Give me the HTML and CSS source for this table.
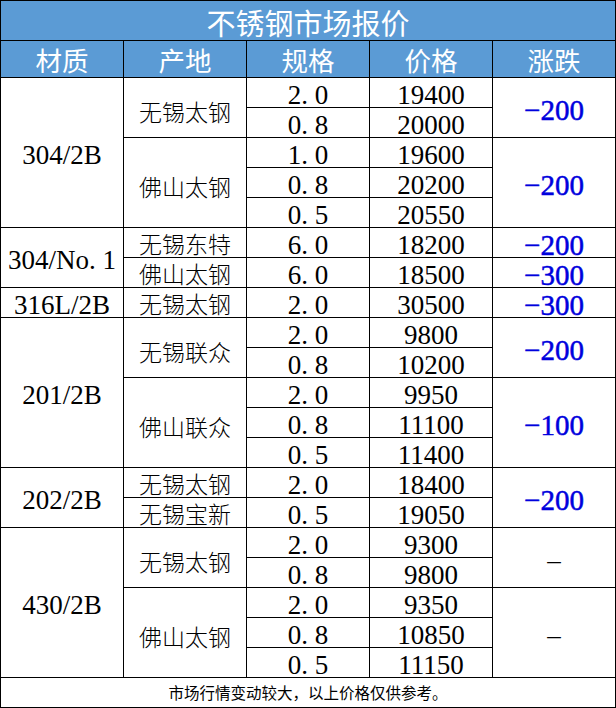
FILE: index.html
```html
<!DOCTYPE html>
<html lang="zh-CN">
<head>
<meta charset="utf-8">
<title>不锈钢市场报价</title>
<link rel="stylesheet" href="styles.css">
</head>
<body>
<div class="sheet">
  <div class="title">不锈钢市场报价</div>
  <div class="head">材质</div>
  <div class="head">产地</div>
  <div class="head">规格</div>
  <div class="head">价格</div>
  <div class="head">涨跌</div>

  <div class="c num span5">304/2B</div>
  <div class="c cn span2">无锡太钢</div>
  <div class="c num">2<span class="pt">.</span>0</div>
  <div class="c num">19400</div>
  <div class="c chg span2">−200</div>
  <div class="c num">0<span class="pt">.</span>8</div>
  <div class="c num">20000</div>
  <div class="c cn span3">佛山太钢</div>
  <div class="c num">1<span class="pt">.</span>0</div>
  <div class="c num">19600</div>
  <div class="c chg span3">−200</div>
  <div class="c num">0<span class="pt">.</span>8</div>
  <div class="c num">20200</div>
  <div class="c num">0<span class="pt">.</span>5</div>
  <div class="c num">20550</div>

  <div class="c num span2">304/No<span class="pt">.</span>1</div>
  <div class="c cn">无锡东特</div>
  <div class="c num">6<span class="pt">.</span>0</div>
  <div class="c num">18200</div>
  <div class="c chg">−200</div>
  <div class="c cn">佛山太钢</div>
  <div class="c num">6<span class="pt">.</span>0</div>
  <div class="c num">18500</div>
  <div class="c chg">−300</div>

  <div class="c num">316L/2B</div>
  <div class="c cn">无锡太钢</div>
  <div class="c num">2<span class="pt">.</span>0</div>
  <div class="c num">30500</div>
  <div class="c chg">−300</div>

  <div class="c num span5">201/2B</div>
  <div class="c cn span2">无锡联众</div>
  <div class="c num">2<span class="pt">.</span>0</div>
  <div class="c num">9800</div>
  <div class="c chg span2">−200</div>
  <div class="c num">0<span class="pt">.</span>8</div>
  <div class="c num">10200</div>
  <div class="c cn span3">佛山联众</div>
  <div class="c num">2<span class="pt">.</span>0</div>
  <div class="c num">9950</div>
  <div class="c chg span3">−100</div>
  <div class="c num">0<span class="pt">.</span>8</div>
  <div class="c num">11100</div>
  <div class="c num">0<span class="pt">.</span>5</div>
  <div class="c num">11400</div>

  <div class="c num span2">202/2B</div>
  <div class="c cn">无锡太钢</div>
  <div class="c num">2<span class="pt">.</span>0</div>
  <div class="c num">18400</div>
  <div class="c chg span2">−200</div>
  <div class="c cn">无锡宝新</div>
  <div class="c num">0<span class="pt">.</span>5</div>
  <div class="c num">19050</div>

  <div class="c num span5">430/2B</div>
  <div class="c cn span2">无锡太钢</div>
  <div class="c num">2<span class="pt">.</span>0</div>
  <div class="c num">9300</div>
  <div class="c dash span2">–</div>
  <div class="c num">0<span class="pt">.</span>8</div>
  <div class="c num">9800</div>
  <div class="c cn span3">佛山太钢</div>
  <div class="c num">2<span class="pt">.</span>0</div>
  <div class="c num">9350</div>
  <div class="c dash span3">–</div>
  <div class="c num">0<span class="pt">.</span>8</div>
  <div class="c num">10850</div>
  <div class="c num">0<span class="pt">.</span>5</div>
  <div class="c num">11150</div>

  <div class="note">市场行情变动较大，以上价格仅供参考。</div>
</div>
</body>
</html>
```
FILE: styles.css
```css
* { box-sizing: border-box; }
html, body { margin: 0; padding: 0; background: #fff; }

.sheet {
  width: 616px;
  display: grid;
  grid-template-columns: repeat(5, 123px);
  grid-template-rows: 40px 37px repeat(20, 30px) 30px;
  border-top: 1px solid #000;
  border-left: 1px solid #000;
  font-family: "Noto Sans CJK SC", sans-serif;
  color: #000;
}

.sheet > div {
  border-right: 1px solid #000;
  border-bottom: 1px solid #000;
  display: flex;
  align-items: center;
  justify-content: center;
  white-space: nowrap;
}

.title {
  grid-column: span 5;
  background: #5b9bd5;
  color: #fff;
  font-size: 29px;
  line-height: 1;
  padding-top: 4px;
}

.head {
  background: #5b9bd5;
  color: #fff;
  font-size: 26.5px;
  line-height: 1;
  padding-top: 3px;
}

.c { padding-top: 5px; line-height: 1; }

.num {
  font-family: "Liberation Serif", serif;
  font-size: 27px;
  line-height: 24px;
}
.pt { letter-spacing: 0.25em; }

.cn {
  font-size: 23px;
  font-weight: 300;
  line-height: 24px;
  padding-top: 1px;
}
.cn.span2, .cn.span3 { padding-top: 6px; }

.chg {
  font-family: "Liberation Serif", serif;
  font-size: 29px;
  line-height: 24px;
  color: #0000dd;
  -webkit-text-stroke: 0.5px #0000dd;
}

.dash {
  font-family: "Liberation Serif", serif;
  font-size: 27px;
}

.span2 { grid-row: span 2; }
.span3 { grid-row: span 3; }
.span5 { grid-row: span 5; }

.note {
  grid-column: span 5;
  font-size: 15.5px;
  line-height: 1;
}
```
